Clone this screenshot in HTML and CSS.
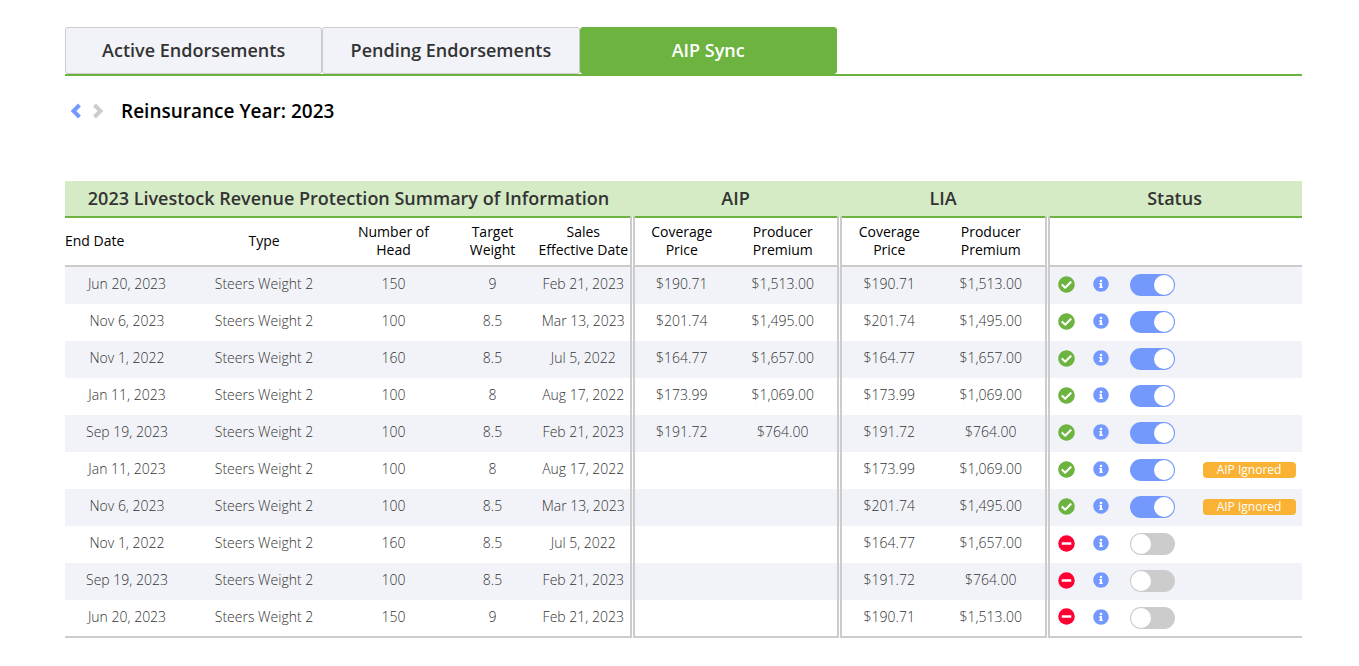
FILE: index.html
```html
<!DOCTYPE html>
<html lang="en">
<head>
<meta charset="utf-8">
<title>AIP Sync</title>
<link rel="stylesheet" href="styles.css">
</head>
<body>
<svg class="sprite" aria-hidden="true">
  <symbol id="check" viewBox="0 0 512 512"><circle cx="256" cy="256" r="240" fill="#fff"/><path fill="#6db33f" d="M504 256c0 136.967-111.033 248-248 248S8 392.967 8 256 119.033 8 256 8s248 111.033 248 248zM227.314 387.314l184-184c6.248-6.248 6.248-16.379 0-22.627l-22.627-22.627c-6.248-6.249-16.379-6.249-22.628 0L216 308.118l-70.059-70.059c-6.248-6.248-16.379-6.248-22.628 0l-22.627 22.627c-6.248 6.248-6.248 16.379 0 22.627l104 104c6.249 6.249 16.379 6.249 22.628.001z"/></symbol>
  <symbol id="minus" viewBox="0 0 512 512"><circle cx="256" cy="256" r="248" fill="#ff0033"/><rect x="112" y="216" width="288" height="80" rx="12" fill="#fff"/></symbol>
  <symbol id="info" viewBox="0 0 512 512"><circle cx="256" cy="256" r="240" fill="#fff"/><path fill="#7399ff" d="M256 8C119.043 8 8 119.083 8 256c0 136.997 111.043 248 248 248s248-111.003 248-248C504 119.083 392.957 8 256 8zm0 110c23.196 0 42 18.804 42 42s-18.804 42-42 42-42-18.804-42-42 18.804-42 42-42zm56 254c0 6.627-5.373 12-12 12h-88c-6.627 0-12-5.373-12-12v-24c0-6.627 5.373-12 12-12h12v-64h-12c-6.627 0-12-5.373-12-12v-24c0-6.627 5.373-12 12-12h64c6.627 0 12 5.373 12 12v100h12c6.627 0 12 5.373 12 12v24z"/></symbol>
</svg>
<main class="page">
  <nav class="tabs" aria-label="Endorsements">
    <button class="tab" type="button">Active Endorsements</button>
    <button class="tab" type="button">Pending Endorsements</button>
    <button class="tab tab-active" type="button" aria-current="page">AIP Sync</button>
  </nav>
  <div class="year">
    <button class="arrow arrow-prev" type="button" aria-label="Previous year"><svg viewBox="0 0 12 16"><path d="M9.500 2 3.500 8l6 6"/></svg></button>
    <button class="arrow arrow-next" type="button" aria-label="Next year" disabled><svg viewBox="0 0 12 16"><path d="M2.500 2l6 6-6 6"/></svg></button>
    <h1 class="year-title">Reinsurance Year: 2023</h1>
  </div>
  <table class="summary">
    <colgroup>
      <col class="c-end"><col class="c-type"><col class="c-head"><col class="c-weight"><col class="c-sales">
      <col class="c-price"><col class="c-premium"><col class="c-price-lia"><col class="c-premium"><col class="c-status">
    </colgroup>
    <thead>
      <tr class="groups"><th colspan="5">2023 Livestock Revenue Protection Summary of Information</th><th colspan="2">AIP</th><th colspan="2">LIA</th><th>Status</th></tr>
      <tr class="heads"><th class="left">End Date</th><th>Type</th><th>Number of<br>Head</th><th>Target<br>Weight</th><th>Sales<br>Effective Date</th><th class="split">Coverage<br>Price</th><th>Producer<br>Premium</th><th class="split">Coverage<br>Price</th><th>Producer<br>Premium</th><th class="split"></th></tr>
    </thead>
    <tbody>
      <tr><td>Jun 20, 2023</td><td>Steers Weight 2</td><td>150</td><td>9</td><td>Feb 21, 2023</td><td class="split">$190.71</td><td>$1,513.00</td><td class="split">$190.71</td><td>$1,513.00</td><td class="split"><div class="status"><svg class="state"><use href="#check"/></svg><svg class="info"><use href="#info"/></svg><input class="toggle" type="checkbox" role="switch" aria-label="Sync row 1" checked></div></td></tr>
      <tr><td>Nov 6, 2023</td><td>Steers Weight 2</td><td>100</td><td>8.5</td><td>Mar 13, 2023</td><td class="split">$201.74</td><td>$1,495.00</td><td class="split">$201.74</td><td>$1,495.00</td><td class="split"><div class="status"><svg class="state"><use href="#check"/></svg><svg class="info"><use href="#info"/></svg><input class="toggle" type="checkbox" role="switch" aria-label="Sync row 2" checked></div></td></tr>
      <tr><td>Nov 1, 2022</td><td>Steers Weight 2</td><td>160</td><td>8.5</td><td>Jul 5, 2022</td><td class="split">$164.77</td><td>$1,657.00</td><td class="split">$164.77</td><td>$1,657.00</td><td class="split"><div class="status"><svg class="state"><use href="#check"/></svg><svg class="info"><use href="#info"/></svg><input class="toggle" type="checkbox" role="switch" aria-label="Sync row 3" checked></div></td></tr>
      <tr><td>Jan 11, 2023</td><td>Steers Weight 2</td><td>100</td><td>8</td><td>Aug 17, 2022</td><td class="split">$173.99</td><td>$1,069.00</td><td class="split">$173.99</td><td>$1,069.00</td><td class="split"><div class="status"><svg class="state"><use href="#check"/></svg><svg class="info"><use href="#info"/></svg><input class="toggle" type="checkbox" role="switch" aria-label="Sync row 4" checked></div></td></tr>
      <tr><td>Sep 19, 2023</td><td>Steers Weight 2</td><td>100</td><td>8.5</td><td>Feb 21, 2023</td><td class="split">$191.72</td><td>$764.00</td><td class="split">$191.72</td><td>$764.00</td><td class="split"><div class="status"><svg class="state"><use href="#check"/></svg><svg class="info"><use href="#info"/></svg><input class="toggle" type="checkbox" role="switch" aria-label="Sync row 5" checked></div></td></tr>
      <tr><td>Jan 11, 2023</td><td>Steers Weight 2</td><td>100</td><td>8</td><td>Aug 17, 2022</td><td class="split"></td><td></td><td class="split">$173.99</td><td>$1,069.00</td><td class="split"><div class="status"><svg class="state"><use href="#check"/></svg><svg class="info"><use href="#info"/></svg><input class="toggle" type="checkbox" role="switch" aria-label="Sync row 6" checked><span class="badge">AIP Ignored</span></div></td></tr>
      <tr><td>Nov 6, 2023</td><td>Steers Weight 2</td><td>100</td><td>8.5</td><td>Mar 13, 2023</td><td class="split"></td><td></td><td class="split">$201.74</td><td>$1,495.00</td><td class="split"><div class="status"><svg class="state"><use href="#check"/></svg><svg class="info"><use href="#info"/></svg><input class="toggle" type="checkbox" role="switch" aria-label="Sync row 7" checked><span class="badge">AIP Ignored</span></div></td></tr>
      <tr><td>Nov 1, 2022</td><td>Steers Weight 2</td><td>160</td><td>8.5</td><td>Jul 5, 2022</td><td class="split"></td><td></td><td class="split">$164.77</td><td>$1,657.00</td><td class="split"><div class="status"><svg class="state"><use href="#minus"/></svg><svg class="info"><use href="#info"/></svg><input class="toggle" type="checkbox" role="switch" aria-label="Sync row 8"></div></td></tr>
      <tr><td>Sep 19, 2023</td><td>Steers Weight 2</td><td>100</td><td>8.5</td><td>Feb 21, 2023</td><td class="split"></td><td></td><td class="split">$191.72</td><td>$764.00</td><td class="split"><div class="status"><svg class="state"><use href="#minus"/></svg><svg class="info"><use href="#info"/></svg><input class="toggle" type="checkbox" role="switch" aria-label="Sync row 9"></div></td></tr>
      <tr><td>Jun 20, 2023</td><td>Steers Weight 2</td><td>150</td><td>9</td><td>Feb 21, 2023</td><td class="split"></td><td></td><td class="split">$190.71</td><td>$1,513.00</td><td class="split"><div class="status"><svg class="state"><use href="#minus"/></svg><svg class="info"><use href="#info"/></svg><input class="toggle" type="checkbox" role="switch" aria-label="Sync row 10"></div></td></tr>
    </tbody>
  </table>
</main>
</body>
</html>
```
FILE: styles.css
```css
* { box-sizing: border-box; }
body {
  margin: 0;
  background: #fff;
  color: #333;
  font-family: "Open Sans", sans-serif;
  font-size: 14px;
}
.sprite { display: none; }
.page { padding: 27px 57px 28px 65px; }

.tabs {
  display: flex;
  border-bottom: 2px solid #6db33f;
}
.tab {
  width: 20.8%;
  height: 47px;
  padding: 0 0 2px;
  border: 1px solid #ccc;
  border-radius: 3px;
  background: #f2f3f8;
  color: #333;
  font: 600 18px/24px "Open Sans", sans-serif;
}
.tab-active {
  border-color: #6db33f;
  background: #6db33f;
  color: #fff;
}

.year {
  display: flex;
  align-items: center;
  height: 70px;
  margin-bottom: 35px;
  padding-left: 5px;
}
.arrow {
  width: 12px;
  height: 16px;
  margin-right: 10px;
  padding: 0;
  border: 0;
  background: none;
}
.arrow svg {
  display: block;
  width: 12px;
  height: 16px;
  fill: none;
  stroke: currentColor;
  stroke-width: 4;
}
.arrow-prev { color: #7399ff; }
.arrow-next { color: #ccc; }
.year-title {
  margin: 0 0 0 7px;
  color: #000;
  font-size: 19px;
  font-weight: 600;
  line-height: 26px;
}

.summary {
  width: 100%;
  table-layout: fixed;
  border-collapse: collapse;
}
.c-end { width: 124px; }
.c-type { width: 150px; }
.c-head { width: 109px; }
.c-weight { width: 89px; }
.c-sales { width: 95px; }
.c-price { width: 97px; }
.c-price-lia { width: 98px; }
.c-premium { width: 110px; }
.c-status { width: 255px; }
.summary th,
.summary td {
  padding: 0;
  text-align: center;
  white-space: nowrap;
}
.summary .groups th {
  height: 36px;
  padding-bottom: 2px;
  background: #d5ebc5;
  border-bottom: 2px solid #6db33f;
  font-size: 18px;
  font-weight: 600;
  line-height: 24px;
}
.summary .heads th {
  height: 49px;
  padding-bottom: 2px;
  border-bottom: 2px solid #ccc;
  color: #000;
  font-weight: 500;
  line-height: 18px;
}
.summary .heads .left { text-align: left; }
.summary .split { border-left: 5px double #ccc; }
.summary td {
  height: 37px;
  padding-bottom: 3px;
  font-weight: 300;
  line-height: 20px;
}
.summary tbody tr:first-child td { height: 38px; }
.summary tbody tr:nth-child(odd) { background: #f2f3f8; }
.summary tbody tr:last-child td { border-bottom: 2px solid #ccc; }

.status {
  display: grid;
  grid-template-columns: 35px 37px 73px 93px;
  align-items: center;
  height: 24px;
  padding-left: 8px;
}
.state { width: 17px; height: 17px; }
.info { width: 16px; height: 16px; }
.toggle {
  appearance: none;
  display: flex;
  width: 45px;
  height: 22px;
  margin: 2px 0 0;
  padding: 0 1px;
  align-items: center;
  border-radius: 11px;
  background: #ccc;
}
.toggle::before {
  content: "";
  width: 20px;
  height: 20px;
  border-radius: 50%;
  background: #fff;
}
.toggle:checked {
  justify-content: flex-end;
  background: #7399ff;
}
.badge {
  height: 16px;
  margin-top: 2px;
  border-radius: 4px;
  background: #f9b233;
  color: #fff;
  font-size: 12px;
  font-weight: 400;
  line-height: 16px;
}
```
